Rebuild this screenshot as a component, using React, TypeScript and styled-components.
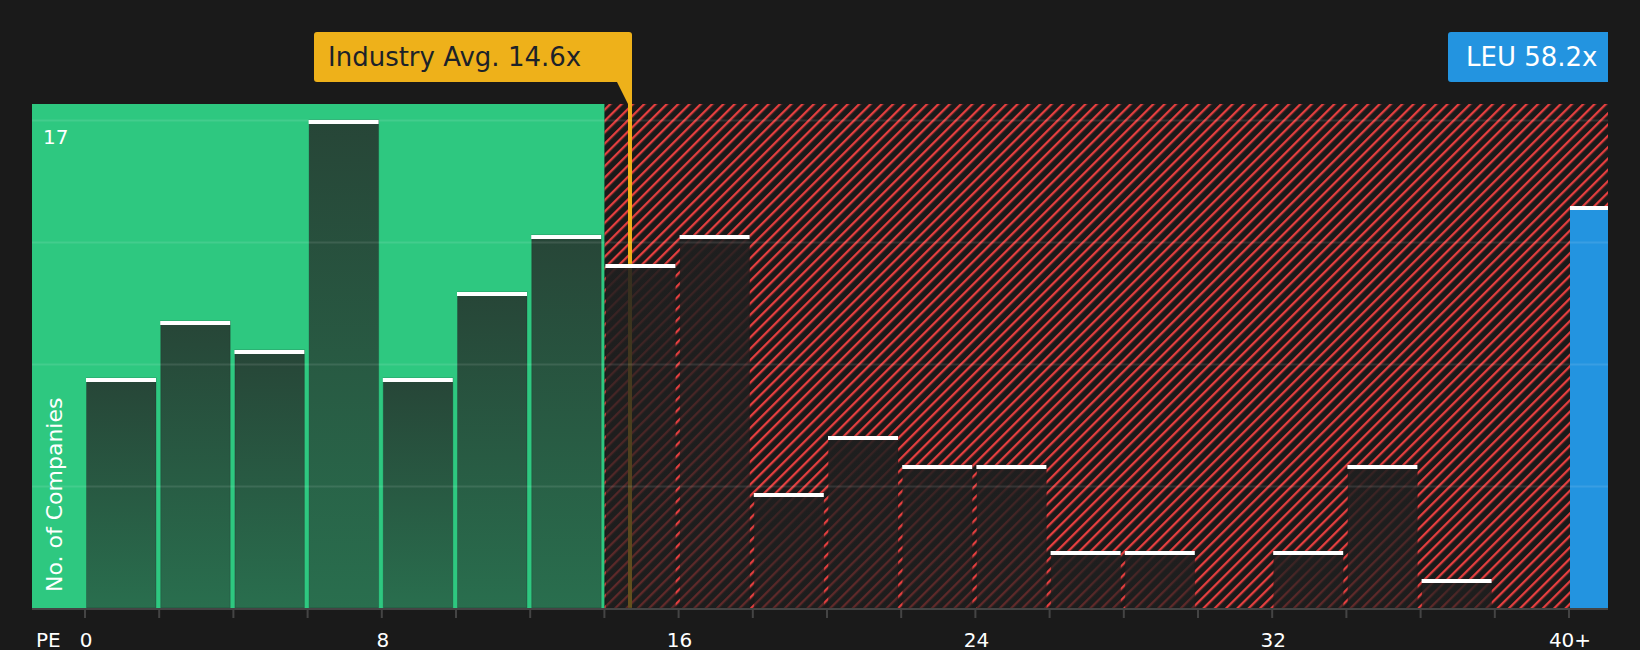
import styled, { createGlobalStyle } from "styled-components";

const PLOT_LEFT = 32;
const PLOT_RIGHT = 1608;
const PLOT_TOP = 104;
const BASELINE = 608;
const FIRST_TICK = 85;
const BIN_WIDTH = 74.2;
const UNIT = 28.7;
const SPLIT_BIN = 7;
const SPLIT_X = FIRST_TICK + BIN_WIDTH * SPLIT_BIN;
const INDUSTRY_X = 630;

const COMPANIES = [8, 10, 9, 17, 8, 11, 13, 12, 13, 4, 6, 5, 5, 2, 2, 0, 2, 5, 1];
const GRID_LINES = [120.5, 242.5, 364.5, 486.5];
const AXIS_LABELS = ["0", "8", "16", "24", "32", "40+"];

const GlobalStyle = createGlobalStyle`
  html, body {
    margin: 0;
    background: #1a1a1a;
  }
`;

const Page = styled.div`
  position: relative;
  width: 1640px;
  height: 650px;
  overflow: hidden;
  background: #1a1a1a;
  font-family: "DejaVu Sans", sans-serif;
`;

const ChartSvg = styled.svg`
  display: block;
`;

const Callout = styled.div<{ $side: "industry" | "company" }>`
  position: absolute;
  top: 32px;
  height: 50px;
  display: flex;
  align-items: center;
  box-sizing: border-box;
  font-size: 26px;
  ${({ $side }) =>
    $side === "industry"
      ? `left: 314px;
         width: 318px;
         padding-left: 14px;
         border-radius: 3px 3px 0 3px;
         background: #eeb11a;
         color: #1c2229;`
      : `right: 32px;
         width: 160px;
         padding-left: 18px;
         border-radius: 3px 0 0 3px;
         background: #2394e0;
         color: #ffffff;`}
`;

const AxisLabel = styled.text`
  fill: #ffffff;
  font-size: 20px;
`;

const CountLabel = styled.text`
  fill: #ffffff;
  font-size: 20px;
`;

const AxisTitle = styled.text`
  fill: #ffffff;
  font-size: 22px;
`;

function barTop(count: number) {
  return Math.round(BASELINE - count * UNIT);
}

function App() {
  return (
    <Page>
      <GlobalStyle />
      <ChartSvg width={1640} height={650} viewBox="0 0 1640 650">
        <defs>
          <pattern
            id="hatch"
            patternUnits="userSpaceOnUse"
            width="8"
            height="8"
            patternTransform="rotate(45)"
          >
            <rect width="8" height="8" fill="#1a1a1a" />
            <rect width="2.3" height="8" fill="#e53f3f" />
          </pattern>
          <linearGradient id="barShade" x1="0" y1="0" x2="0" y2="1">
            <stop offset="0" stopColor="#252525" stopOpacity="0.8" />
            <stop offset="1" stopColor="#252525" stopOpacity="0.55" />
          </linearGradient>
          <linearGradient id="barShadeHatched" x1="0" y1="0" x2="0" y2="1">
            <stop offset="0" stopColor="#1f1f1f" stopOpacity="0.9" />
            <stop offset="1" stopColor="#1f1f1f" stopOpacity="0.66" />
          </linearGradient>
        </defs>

        <rect x={SPLIT_X} y={PLOT_TOP} width={PLOT_RIGHT - SPLIT_X} height={BASELINE - PLOT_TOP} fill="url(#hatch)" />
        <rect x={PLOT_LEFT} y={PLOT_TOP} width={SPLIT_X - PLOT_LEFT} height={BASELINE - PLOT_TOP} fill="#2ec880" />

        <polygon points={`617,82 628,104 632,104 632,82`} fill="#eeb11a" />
        <rect x={INDUSTRY_X - 2} y={104} width={4} height={BASELINE - 104} fill="#eeb11a" />

        {COMPANIES.map((count, i) => {
          const x = FIRST_TICK + 1.5 + BIN_WIDTH * i;
          const y = barTop(count);
          return count > 0 ? (
            <rect
              key={i}
              x={x}
              y={y}
              width={69.5}
              height={BASELINE - y}
              fill={i < SPLIT_BIN ? "url(#barShade)" : "url(#barShadeHatched)"}
              stroke="#1a1a1a"
              strokeOpacity="0.25"
            />
          ) : null;
        })}
        <rect x={1570} y={barTop(14)} width={38} height={BASELINE - barTop(14)} fill="#2394e0" />

        {GRID_LINES.map((y) => (
          <rect key={y} x={PLOT_LEFT} y={y - 1} width={PLOT_RIGHT - PLOT_LEFT} height={2} fill="#ffffff" opacity="0.1" />
        ))}

        {COMPANIES.map((count, i) =>
          count > 0 ? (
            <rect key={i} x={FIRST_TICK + 1 + BIN_WIDTH * i} y={barTop(count)} width={70} height={4} fill="#ffffff" />
          ) : null
        )}
        <rect x={1570} y={barTop(14)} width={38} height={4} fill="#ffffff" />

        <rect x={PLOT_LEFT} y={BASELINE} width={PLOT_RIGHT - PLOT_LEFT} height={2} fill="#444444" />
        {Array.from({ length: 21 }, (_, i) => (
          <rect key={i} x={FIRST_TICK - 1 + BIN_WIDTH * i} y={BASELINE + 2} width={2} height={8} fill="#444444" />
        ))}

        <CountLabel x={43} y={144}>17</CountLabel>
        <AxisTitle transform="translate(62 592) rotate(-90)">No. of Companies</AxisTitle>

        <AxisLabel x={36} y={647}>PE</AxisLabel>
        {AXIS_LABELS.map((label, i) => (
          <AxisLabel key={label} x={FIRST_TICK + 1 + BIN_WIDTH * 4 * i} y={647} textAnchor="middle">
            {label}
          </AxisLabel>
        ))}
      </ChartSvg>
      <Callout $side="industry">Industry Avg. 14.6x</Callout>
      <Callout $side="company">LEU 58.2x</Callout>
    </Page>
  );
}

export default App;
